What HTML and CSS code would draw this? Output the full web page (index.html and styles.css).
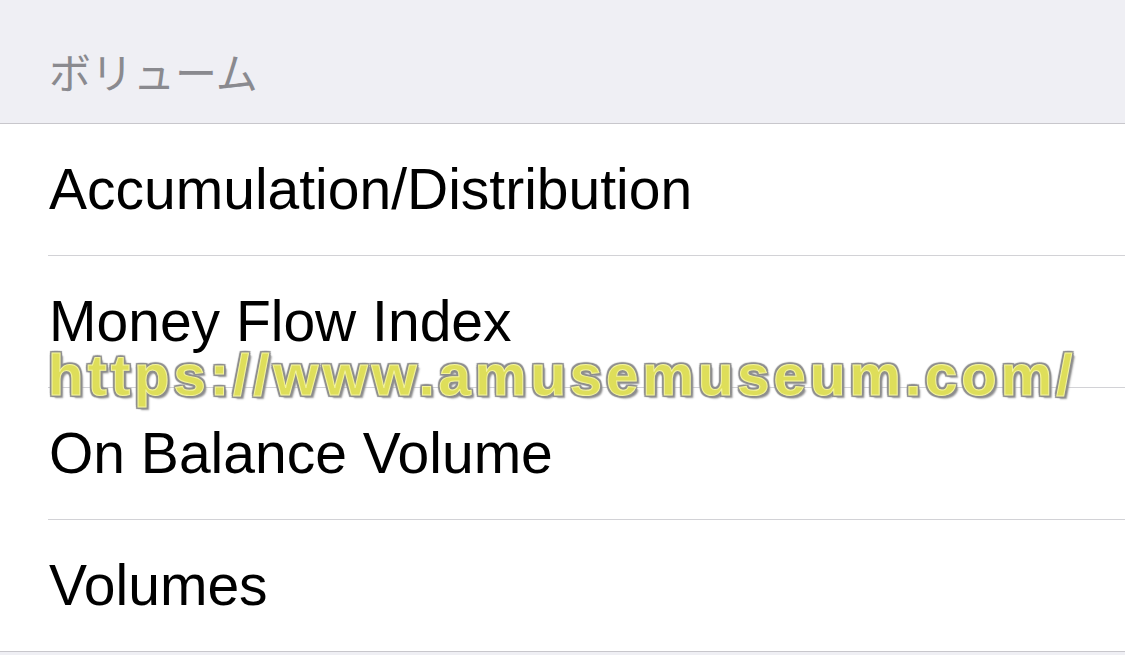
FILE: index.html
```html
<!DOCTYPE html>
<html lang="ja">
<head>
  <meta charset="UTF-8" />
  <title>ボリューム</title>
  <meta name="viewport" content="width=device-width, initial-scale=1.0" />
  <link rel="stylesheet" href="styles.css">
</head>
<body>
  <div class="cabecalho">ボリューム</div>

  <ul class="lista">
    <li class="item"><span class="rotulo">Accumulation/Distribution</span></li>
    <li class="item"><span class="rotulo">Money Flow Index</span></li>
    <li class="item"><span class="rotulo">On Balance Volume</span></li>
    <li class="item"><span class="rotulo">Volumes</span></li>
  </ul>

  <div class="marca">https://www.amusemuseum.com/</div>
</body>
</html>
```

FILE: styles.css
```css
body {
  background-color: #efeff4;
  margin: 0;
  font-family: 'Liberation Sans', Arial, sans-serif;
  position: relative;
  height: 655px;
  overflow: hidden;
}
.cabecalho {
  height: 124px;
  box-sizing: border-box;
  padding: 0 0 31px 49px;
  display: flex;
  align-items: flex-end;
  font-family: 'Noto Sans CJK JP', sans-serif;
  font-size: 42px;
  color: #8a8a8f;
  border-bottom: 1px solid #c8c7cc;
  line-height: 1;
}
.lista {
  list-style: none;
  margin: 0;
  padding: 0 0 0 48px;
  background-color: #fff;
  border-bottom: 1px solid #c8c7cc;
}
.item {
  height: 132px;
  box-sizing: border-box;
  display: flex;
  align-items: center;
  border-bottom: 1px solid #d2d2d6;
  padding-left: 1px;
}
.item:last-child {
  border-bottom: none;
  height: 131px;
}
.rotulo {
  font-size: 57px;
  color: #000;
  line-height: 1;
}
.marca {
  position: absolute;
  left: 48px;
  top: 341px;
  font-family: 'Liberation Sans', Arial, sans-serif;
  font-weight: bold;
  font-size: 58px;
  letter-spacing: 4px;
  color: #dede5a;
  -webkit-text-stroke: 1px #f4f49c;
  text-shadow: 2px 0 1px #8e8e8e, -2px 0 1px #8e8e8e, 0 2px 1px #8e8e8e, 0 -2px 1px #8e8e8e,
    2px 2px 1px #8e8e8e, -2px -2px 1px #8e8e8e, 2px -2px 1px #8e8e8e, -2px 2px 1px #8e8e8e,
    3px 3px 2px #9a9a9a;
  white-space: nowrap;
}
```
